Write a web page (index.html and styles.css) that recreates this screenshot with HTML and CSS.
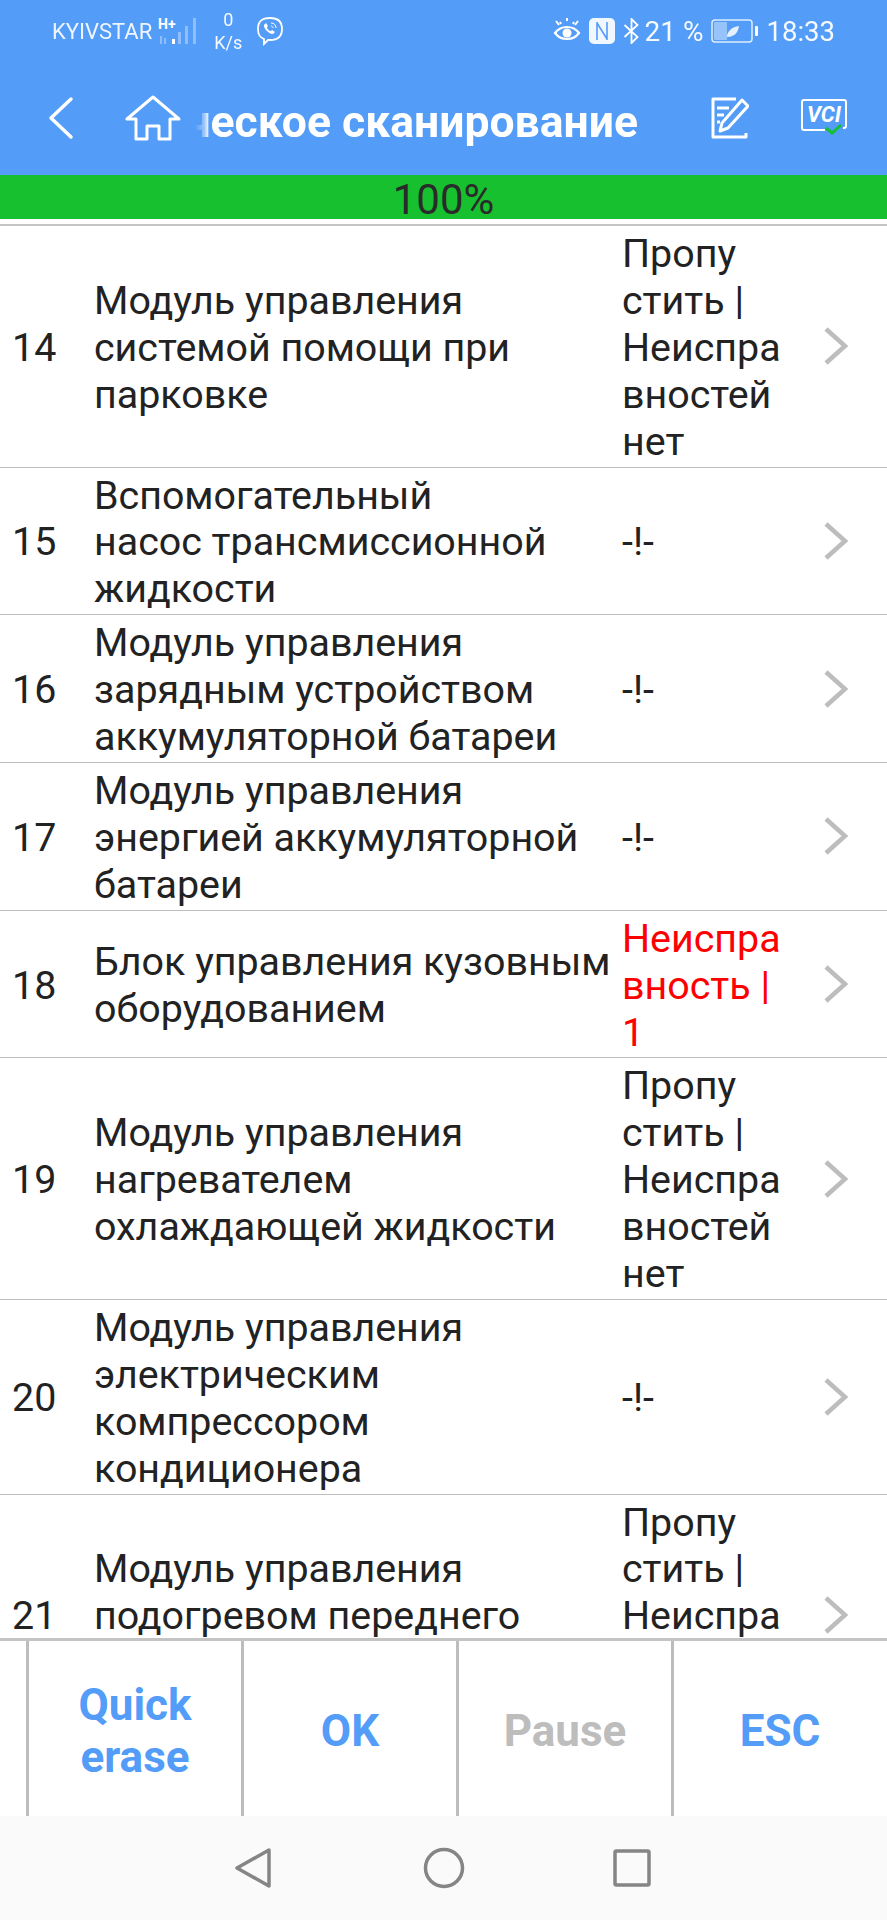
FILE: index.html
```html
<!DOCTYPE html>
<html lang="ru">
<head>
<meta charset="utf-8">
<title>Сканирование</title>
<link rel="stylesheet" href="styles.css">
</head>
<body>
<div class="app">
  <header class="head">
    <div class="status">
      <div class="status-left">
        <span class="carrier">KYIVSTAR</span>
        <svg class="sig" width="42" height="30" viewBox="0 0 42 30">
          <text x="0" y="13" class="sig-h">H+</text>
          <g fill="#fff" opacity=".35">
            <rect x="2" y="20" width="2" height="8"/><rect x="6" y="22" width="2" height="6"/>
            <rect x="20" y="16" width="3" height="12"/><rect x="27" y="10" width="3" height="18"/><rect x="35" y="2" width="3" height="26"/>
          </g>
          <rect x="14" y="23" width="3" height="5" fill="#fff"/>
        </svg>
        <span class="speed"><span>0</span><span>K/s</span></span>
        <svg class="viber" width="28" height="30" viewBox="0 0 28 30" fill="none" stroke="#fff" stroke-width="1.8">
          <path d="M14 2c8 0 12 3 12 11s-4 11-12 11h-2l-4 4v-5C3 21 2 18 2 13 2 5 6 2 14 2z"/>
          <path d="M9 8c-2 1-1 4 2 7s6 4 7 2l1-1-3-2-1 1c-2 0-4-2-4-4l1-1-2-3z" fill="#fff" stroke="none"/>
          <path d="M15 7c3 0 5 2 5 5M15 10c1 0 2 1 2 2" stroke-width="1"/>
        </svg>
      </div>
      <div class="status-right">
        <svg class="ic-eye" width="28" height="26" viewBox="0 0 28 26" fill="none" stroke="#fff" stroke-width="2.2">
          <path d="M2 15c6-8 18-8 24 0-6 8-18 8-24 0z"/><circle cx="14" cy="15" r="4.5" fill="#fff" stroke="none"/>
          <path d="M3 3l3 4M14 3v-3M25 3l-3 4M8 6l-1-2M20 6l1-2" stroke-width="2"/>
        </svg>
        <svg class="ic-nfc" width="26" height="26" viewBox="0 0 26 26">
          <rect width="26" height="26" rx="5" fill="#fff" opacity=".92"/>
          <path d="M8 4v18M8 5l10 16M18 4v18" fill="none" stroke="#539cf8" stroke-width="1.6"/>
        </svg>
        <svg class="ic-bt" width="17" height="26" viewBox="0 0 16 26" fill="none" stroke="#fff" stroke-width="1.8">
          <path d="M1 7l13 12-6 6V1l6 6L1 19"/>
        </svg>
        <span class="pct">21 %</span>
        <svg class="ic-bat" width="48" height="24" viewBox="0 0 48 24">
          <rect x="1" y="1" width="40" height="22" rx="3" fill="none" stroke="#fff" stroke-opacity=".8" stroke-width="1.5"/>
          <rect x="3" y="3" width="13" height="18" rx="1" fill="#fff" opacity=".4"/>
          <path d="M16 18c0-6 5-10 12-11-1 7-5 11-12 11z" fill="#fff" opacity=".85"/>
          <rect x="44" y="7" width="3" height="10" rx="1" fill="#fff"/>
        </svg>
        <span class="clock">18:33</span>
      </div>
    </div>
    <div class="toolbar">
      <svg class="back" width="30" height="44" viewBox="0 0 30 44" fill="none" stroke="#fff" stroke-width="3.5" stroke-linecap="round" stroke-linejoin="round">
        <path d="M24 3L4 22l20 19"/>
      </svg>
      <svg class="home" width="56" height="46" viewBox="0 0 56 46" fill="none" stroke="#fff" stroke-width="3" stroke-linejoin="round">
        <path d="M28 2L2 24h9v20h11V31h12v13h11V24h9z"/>
      </svg>
      <div class="title"><span>Диагностическое сканирование</span></div>
      <svg class="edit" width="38" height="42" viewBox="0 0 38 42" fill="none" stroke="#fff" stroke-width="3" stroke-linejoin="round">
        <path d="M25 2H2v38h33v-4"/>
        <path d="M31 3l6 6-20 22-8 3 2-8z"/>
        <path d="M6 11h12M6 18h7M6 25h3" stroke-width="3"/>
      </svg>
      <svg class="vci" width="46" height="38" viewBox="0 0 46 38">
        <path d="M24 31H3a2 2 0 0 1-2-2V3a2 2 0 0 1 2-2h40a2 2 0 0 1 2 2v24a2 2 0 0 1-2 2h-1" fill="none" stroke="#fff" stroke-width="2"/>
        <text x="23" y="23" class="vci-t">VCI</text>
        <path d="M25 29l6 5 9-8" fill="none" stroke="#17c02f" stroke-width="3"/>
      </svg>
    </div>
  </header>
  <div class="progress">100%</div>
  <main class="list">
    <div class="row"><div class="num">14</div><div class="name">Модуль управления системой помощи при парковке</div><div class="state">Пропу<br>стить |<br>Неиспра<br>вностей<br>нет</div><svg class="chev" width="26" height="40" viewBox="0 0 26 40"><path d="M3 3l19 17L3 37"/></svg></div>
    <div class="row"><div class="num">15</div><div class="name">Вспомогательный<br>насос трансмиссионной жидкости</div><div class="state">-!-</div><svg class="chev" width="26" height="40" viewBox="0 0 26 40"><path d="M3 3l19 17L3 37"/></svg></div>
    <div class="row"><div class="num">16</div><div class="name">Модуль управления зарядным устройством аккумуляторной батареи</div><div class="state">-!-</div><svg class="chev" width="26" height="40" viewBox="0 0 26 40"><path d="M3 3l19 17L3 37"/></svg></div>
    <div class="row"><div class="num">17</div><div class="name">Модуль управления энергией аккумуляторной батареи</div><div class="state">-!-</div><svg class="chev" width="26" height="40" viewBox="0 0 26 40"><path d="M3 3l19 17L3 37"/></svg></div>
    <div class="row"><div class="num">18</div><div class="name">Блок управления кузовным оборудованием</div><div class="state fault">Неиспра<br>вность |<br>1</div><svg class="chev" width="26" height="40" viewBox="0 0 26 40"><path d="M3 3l19 17L3 37"/></svg></div>
    <div class="row"><div class="num">19</div><div class="name">Модуль управления нагревателем охлаждающей жидкости</div><div class="state">Пропу<br>стить |<br>Неиспра<br>вностей<br>нет</div><svg class="chev" width="26" height="40" viewBox="0 0 26 40"><path d="M3 3l19 17L3 37"/></svg></div>
    <div class="row"><div class="num">20</div><div class="name">Модуль управления электрическим компрессором кондиционера</div><div class="state">-!-</div><svg class="chev" width="26" height="40" viewBox="0 0 26 40"><path d="M3 3l19 17L3 37"/></svg></div>
    <div class="row"><div class="num">21</div><div class="name">Модуль управления подогревом переднего ветрового стекла</div><div class="state">Пропу<br>стить |<br>Неиспра<br>вностей<br>нет</div><svg class="chev" width="26" height="40" viewBox="0 0 26 40"><path d="M3 3l19 17L3 37"/></svg></div>
  </main>
  <div class="actions">
    <div class="act">Quick<br>erase</div>
    <div class="act">OK</div>
    <div class="act off">Pause</div>
    <div class="act">ESC</div>
  </div>
  <nav class="navbar">
    <svg class="nav-back" width="38" height="42" viewBox="0 0 38 42" fill="none" stroke="#858585" stroke-width="3.5" stroke-linejoin="round"><path d="M35 3L3 21l32 18z"/></svg>
    <svg class="nav-home" width="42" height="42" viewBox="0 0 42 42" fill="none" stroke="#858585" stroke-width="3.5"><circle cx="21" cy="21" r="18.5"/></svg>
    <svg class="nav-recent" width="38" height="38" viewBox="0 0 38 38" fill="none" stroke="#858585" stroke-width="3.5" stroke-linejoin="round"><rect x="2" y="2" width="34" height="34" rx="1.5"/></svg>
  </nav>
</div>
</body>
</html>
```

FILE: styles.css
```css
* { box-sizing: border-box; }
html, body { margin: 0; padding: 0; }
body { width: 887px; height: 1920px; overflow: hidden; background: #fff; font-family: Roboto, "Noto Sans", sans-serif; color: #222; }
.app { display: flex; flex-direction: column; height: 1920px; }

.head { background: #539cf8; height: 175px; flex: none; color: #fff; }
.status { height: 62px; display: flex; justify-content: space-between; align-items: center; padding: 0 52px; }
.status-left, .status-right { display: flex; align-items: center; }
.carrier { font-size: 22px; opacity: .9; white-space: nowrap; }
.sig { margin-left: 6px; }
.sig-h { font-size: 14px; font-weight: 700; fill: #fff; }
.speed { display: flex; flex-direction: column; align-items: center; font-size: 18px; line-height: 23px; margin-left: 14px; opacity: .95; }
.viber { margin-left: 14px; }
.ic-nfc { margin-left: 8px; }
.ic-bt { margin-left: 8px; }
.pct, .clock { opacity: .95; white-space: nowrap; }
.pct { font-size: 28px; margin-left: 5px; }
.clock { font-size: 27.5px; margin-left: 8px; }
.ic-bat { margin-left: 7px; }

.toolbar { height: 113px; display: flex; align-items: center; padding-bottom: 1px; }
.back { margin-left: 47px; flex: none; }
.home { margin-left: 48px; flex: none; }
.title { width: 448px; margin-left: 9px; flex: none; display: flex; justify-content: flex-end; overflow: hidden; white-space: nowrap; font-size: 44.5px; line-height: 60px; font-weight: 700; padding-top: 8px; -webkit-mask-image: linear-gradient(to right, transparent 0, transparent 5px, rgba(0,0,0,.4) 14px, #000 19px); mask-image: linear-gradient(to right, transparent 0, transparent 5px, rgba(0,0,0,.4) 14px, #000 19px); }
.title span { flex: none; }
.edit { margin-left: 73px; flex: none; }
.vci { margin-left: 52px; flex: none; }
.vci-t { font: italic 700 22px Roboto, sans-serif; fill: #fff; text-anchor: middle; }

.progress { background: #17c02f; height: 44px; flex: none; text-align: center; font-size: 42px; line-height: 44px; padding-top: 3px; color: #2a2a2a; }

.list { flex: 1; min-height: 0; overflow: hidden; margin-top: 5px; border-top: 2px solid #c4c4c4; border-bottom: 3px solid #c4c4c4; }
.row { display: flex; align-items: center; padding: 5px 0 1px; border-bottom: 1px solid #bdbdbd; font-size: 39.4px; line-height: 46.9px; }
.num { width: 94px; padding-left: 12px; flex: none; }
.name { width: 528px; flex: none; }
.state { width: 190px; flex: none; }
.fault { color: #f00; }
.chev { flex: none; margin-left: 11px; margin-bottom: 4px; fill: none; stroke: #bdbdbd; stroke-width: 4.5; }

.actions { height: 175px; flex: none; display: flex; padding-left: 26px; }
.act { width: 215px; border-left: 3px solid #bdbdbd; display: flex; align-items: center; justify-content: center; text-align: center; font-size: 44px; font-weight: 700; line-height: 52px; color: #539cf8; padding-top: 5px; }
.act.off { color: #bdbdbd; }

.navbar { height: 104px; flex: none; background: #fafafa; display: flex; align-items: center; padding-left: 234px; }
.nav-home { margin-left: 151px; }
.nav-recent { margin-left: 148px; }
```
